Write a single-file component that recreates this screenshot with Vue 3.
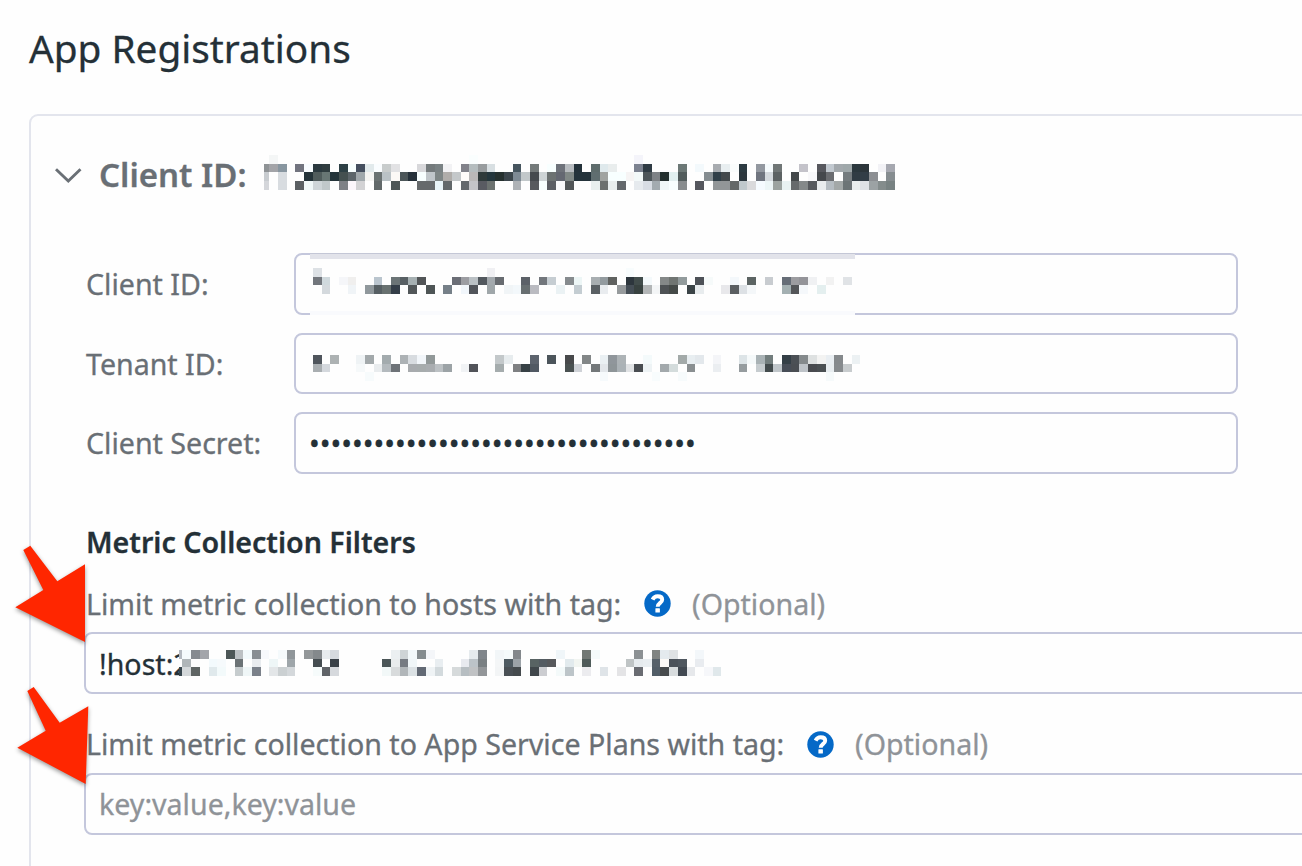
<script setup>
// Column pitch of the redaction mosaic.
const PITCH = 8.69

// Each row: y, height and a list of "column hex" pairs.
const build = (rows, clip = 0) =>
  rows.flatMap(([y, h, data]) =>
    data.split(',').map((pair) => {
      const [i, c] = pair.trim().split(' ')
      const x = Math.max(clip, Math.round(i * PITCH))
      return { x, y, w: Math.round((+i + 1) * PITCH) - x, h, fill: '#' + c }
    })
  )

const headerCells = build([
  [155, 9, '31 f4f6f6,54 fafefe,73 f4f4fa'],
  [164, 8, '30 8f9396,31 a3a4a8,32 8896a0,34 72747f,35 f8fcff,36 2b393f,37 303d40,39 2d4045,40 f8ffff,41 454f5f,42 e2eaec,43 fafdff,44 c8cccc,45 e2e2e4,48 d8d8db,49 747a7c,50 7a8284,51 f2f2f4,53 82828a,54 b5bdbf,55 989c9e,56 d8dfe2,59 46555f,61 747a7a,63 f8ffff,64 6e727a,65 b8bcc0,66 24323a,68 5e6c6c,69 dfe9ec,70 e9eded,73 7c8290,74 2f3b44,78 6c7876,80 f3f9fc,82 a8acb0,83 e8eef0,84 fafcfc,85 2d3b42,87 9398a0,88 f5fafc,89 707676,92 c4c3ca,94 57585e,95 c2c9d0,96 a3a9ad,97 9fa8aa,98 2b383e,99 2c353a,101 f2f2f6,102 a6a8b0'],
  [172, 9, '30 c8ccd0,32 d8dce0,35 25343a,36 505c5c,37 687674,38 24343a,39 445050,40 5c656a,41 a0a8ac,42 f4f4f2,43 6a7272,44 bac2c6,45 fcf9f6,46 4c5659,47 26313a,48 f8ffff,49 c0c6ca,50 7e8686,51 b0adaa,52 c4c8ca,53 fffcfa,54 bab8b8,55 2f3a3a,56 24363c,57 26312f,58 3c464c,59 7e8a94,60 c2c8ca,61 454a4e,62 ced4d6,63 6c7272,64 646872,65 808886,66 24333b,67 24333b,68 606e70,69 a0a3a0,70 f8ffff,71 f8ffff,72 f6f4f4,73 f3f9f9,74 4e565a,75 7e8286,76 24302f,77 e2f0f0,78 525c5c,81 858d91,82 303f48,83 43494c,85 2d373e,87 70757f,88 d5dade,89 5c6263,91 43484a,93 f8f8fa,94 45484c,95 6a6c70,97 757c7f,98 303c44,99 323d46,100 8b8e92,102 868d90'],
  [181, 9, '30 d4d6da,32 d8dce0,34 5b6063,35 f0f8f8,36 ced5d8,37 c0c8ca,39 7e8086,40 fbf6fb,41 d2d2d4,43 62696a,45 4e5656,48 666a6c,49 666a6c,50 e8f4f8,51 62686a,53 64686c,54 c4c4c8,55 595b62,56 6c7270,59 aeb2b6,61 575a5e,62 f8ffff,63 5b5e64,64 f8f8fa,65 525658,68 e9f0ee,69 6c706e,70 e9eeee,71 64686c,73 e6eaee,74 d8dde4,75 a3abb0,76 f0f8f8,77 f8ffff,78 888c8e,80 55575e,82 929698,83 929698,84 646868,85 c0c8cc,86 dadadc,87 f6fbff,88 edf6f7,89 9ca3a0,90 e9f2f2,91 666a6c,92 85898a,93 575a5e,94 e9ecee,95 b5bcc2,96 a3a8a8,97 6c7476,98 e9eeee,99 dfe2e6,100 9ca2a4,101 848c8c,102 788282']
], 264)

const clientCells = build([
  [268, 9, '36 dde1e5,56 f0f0f3,72 f8fcfd'],
  [277, 8, '36 72767c,37 d0d9dd,39 f5f6f9,40 f0efee,43 bac5ce,45 6b7476,46 586064,47 a6b0b2,48 525557,52 6b6e76,53 9c9da2,54 bac0c4,55 52585e,56 a3a9ad,57 676b70,60 5c6168,62 72767c,63 c6cdd2,65 868b8e,66 edf6f6,68 a8aeb1,69 939b9f,70 606260,72 2d363d,73 414c4b,74 f4f9fb,76 848888,77 707572,78 929b9c,80 4d5157,81 f6fafa,84 f4f8fb,86 5c6463,88 c8ccd0,90 666d77,91 9c9ca0,92 949499,93 f0f1f3,95 f2f2f2,97 e0e3e6'],
  [285, 9, '37 d4d9dd,40 f0f4f7,42 90989c,43 565f63,44 687170,45 343e48,47 525759,49 4e5556,51 768088,53 f1f6fb,54 52555b,56 a0a7aa,58 f1f5f7,59 f3f8fb,60 686f71,61 babbc1,64 ebf2f4,66 c4cdd2,68 5a6064,69 e9ecef,71 979b9d,72 454e56,73 384240,74 b3b6b7,75 f3f5f6,76 4e5255,77 454a48,79 3b4447,80 e8ecee,83 e8e8eb,84 5b5f62,85 dde1e5,86 f4f7f9,90 a4b0b2,91 545659,92 f5f8fb,94 e4efef']
])

const tenantCells = build([
  [355, 9, '36 4f555c,38 adb2b3,41 eff3f5,42 a3a9ab,44 a3abae,46 adb2b5,47 d8dce0,48 f2f6fa,49 929999,57 c3c8ca,58 e7ecee,61 5c636d,63 4c555b,65 48494b,67 828687,69 eaf0f3,70 90969b,71 adb3b6,74 f4fafb,78 a3aaa9,79 e8eef1,80 e3e8ec,82 f4f5f8,85 dde4e7,86 f5f9fa,87 a9b2b5,88 727d7d,90 343f46,91 4b5055,92 858a8c,93 dee1e1,94 f3f3f2,95 e9eef2,96 85898c,98 ecf1f3'],
  [364, 8, '36 a9aeb1,37 d4d8dd,41 f6f9fa,43 e9ecee,44 b4babe,45 6e7378,47 a8abae,48 a7acad,49 a9adb0,50 bcc1c4,51 9ca3a6,53 f1f3f5,54 515359,57 a5acad,59 7e8082,60 374145,61 515963,65 4a5151,66 cfd2d7,68 74787a,69 e2e6ea,70 8e9598,71 abb2b6,72 e0e2e4,73 494d51,74 eef3f5,76 a3a9ac,77 d4dcdc,79 8a8f91,82 ebeef1,85 969c9f,87 c6cccf,88 434b4d,89 c0c6ca,90 474d57,91 4a4e53,92 bec3c8,93 494b4f,94 4b5053,95 e8edf0,96 868a8d,97 c8ccce'],
  [372, 9, '42 f7fbfc,69 f6fafc,75 f8fcfd,78 f7fbfc,95 f6fafb']
])

const hostCells = build([
  [650, 9, '20 b4b9c0,21 f5fafc,22 858a90,23 a3a5aa,26 4d5757,27 bcc1c4,28 f3fafc,29 888e93,30 f7f9fc,32 f5fafc,33 90969a,35 939799,36 84898c,37 e8ecef,38 d6dadf,45 ebeff1,46 ced4d6,47 f2f8fa,48 858c8f,49 f4f6f9,54 e6ebee,55 80868b,57 f2f6f8,58 f5fafb,59 83888c,64 f0f6f9,67 727874,68 f4fafa,73 8c9194,75 808482,76 e4eaee,77 dfe2e4,80 f3f7fa'],
  [659, 8, '21 b0b6b9,24 f3fafd,25 f6fafc,27 6c7376,29 e9ecef,31 eef6f7,33 9fa6aa,36 454d51,38 3a4148,44 4b5658,45 e9eced,46 767b82,47 f0f6f8,50 e9eef1,53 e8eaef,54 bcc3c8,55 7a8083,57 f4f6f7,58 4f5b62,59 9ca3a8,61 586363,62 545c62,63 57595c,65 e2eaed,66 f2f5f1,67 4f5b59,72 bfc4c5,73 e6ebee,74 e9eef1,75 56616a,76 fdfaf7,77 4b525a,78 4f575f,80 e9ecf0'],
  [667, 9, '20 38464e,21 d4d8da,22 5f6564,24 e0e9ec,25 f3fafb,27 c6ccce,28 eff6f7,29 7b818a,31 e3e6e8,32 cbd0d2,33 d4d8db,36 f6fbfb,37 606468,38 d6d9dd,44 f2f8f8,45 d8dbdc,46 b1b6b9,47 dbe1e4,48 626974,49 eff3f5,50 d3dadd,52 d6dadb,53 b7bec2,54 c0c2c4,55 939699,57 f3f5f6,58 4a5055,59 454b4e,61 40474b,62 cccdd1,64 f4fafa,65 bdc5c9,67 ececef,69 dfe4e8,71 e4e4e6,73 6a6c72,75 525e68,76 484b4d,77 d8dcde,78 424952,79 e6e8eb,81 f6f7fa,82 e0e8eb']
], 179)

const secret = '•'.repeat(36)
</script>

<template>
  <main class="page">
    <h1 class="title">App Registrations</h1>

    <section class="card">
      <header class="card-head">
        <svg class="chevron" width="28" height="18" viewBox="0 0 28 18">
          <path d="M2 2.300 L14.300 14 L26.500 2.300" fill="none" stroke="#6a7076" stroke-width="2.9" />
        </svg>
        <h2 class="card-title">Client ID:</h2>
        <svg class="mosaic head-mosaic" width="632" height="36" viewBox="264 154 632 36" shape-rendering="crispEdges">
          <rect v-for="(c, i) in headerCells" :key="i" :x="c.x" :y="c.y" :width="c.w" :height="c.h" :fill="c.fill" />
        </svg>
      </header>

      <div class="fields">
        <div class="row">
          <label class="label">Client ID:</label>
          <div class="input client">
            <svg class="mosaic cover" width="545" height="62" viewBox="310 253 545 62" shape-rendering="crispEdges">
              <rect x="310" y="253" width="545" height="62" fill="#fefefe" />
              <rect x="310" y="253" width="545" height="1" fill="#c4c7d6" />
              <rect x="310" y="254" width="545" height="5" fill="#e2e3ea" />
              <rect x="310" y="311" width="545" height="4" fill="#f9fafd" />
              <rect v-for="(c, i) in clientCells" :key="i" :x="c.x" :y="c.y" :width="c.w" :height="c.h" :fill="c.fill" />
            </svg>
          </div>
        </div>
        <div class="row tenant-row">
          <label class="label">Tenant ID:</label>
          <div class="input tenant">
            <svg class="mosaic" width="560" height="57" viewBox="310 335 560 57" shape-rendering="crispEdges">
              <rect v-for="(c, i) in tenantCells" :key="i" :x="c.x" :y="c.y" :width="c.w" :height="c.h" :fill="c.fill" />
            </svg>
          </div>
        </div>
        <div class="row secret-row">
          <label class="label">Client Secret:</label>
          <div class="input secret">{{ secret }}</div>
        </div>
      </div>

      <div class="filters">
        <h3 class="filters-title">Metric Collection Filters</h3>

        <div class="filter-label">
          <span>Limit metric collection to hosts with tag:</span>
          <svg class="help" width="27" height="27" viewBox="0 0 27 27">
            <circle cx="13.500" cy="13.500" r="13.200" fill="#0569c7" />
            <path d="M8.600 9.600 C9.600 7.400 11.200 6.200 13.600 6.200 C16.400 6.200 18.200 7.600 18.200 9.700 C18.200 12.900 13.700 12.900 13.700 16.800" fill="none" stroke="#fff" stroke-width="3.900" />
            <rect x="11.400" y="18.300" width="4.500" height="4.300" rx=".5" fill="#fff" />
          </svg>
          <span class="optional">(Optional)</span>
        </div>
        <div class="input wide host">
          <span class="host-text">!host:2</span>
          <svg class="mosaic" width="560" height="58" viewBox="179 634 560 58" shape-rendering="crispEdges">
            <rect x="179" y="641" width="560" height="44" fill="#fefefe" />
            <rect v-for="(c, i) in hostCells" :key="i" :x="c.x" :y="c.y" :width="c.w" :height="c.h" :fill="c.fill" />
          </svg>
        </div>

        <div class="filter-label second">
          <span>Limit metric collection to App Service Plans with tag:</span>
          <svg class="help" width="27" height="27" viewBox="0 0 27 27">
            <circle cx="13.500" cy="13.500" r="13.200" fill="#0569c7" />
            <path d="M8.600 9.600 C9.600 7.400 11.200 6.200 13.600 6.200 C16.400 6.200 18.200 7.600 18.200 9.700 C18.200 12.900 13.700 12.900 13.700 16.800" fill="none" stroke="#fff" stroke-width="3.900" />
            <rect x="11.400" y="18.300" width="4.500" height="4.300" rx=".5" fill="#fff" />
          </svg>
          <span class="optional">(Optional)</span>
        </div>
        <div class="input wide placeholder">key:value,key:value</div>
      </div>
    </section>

    <svg class="arrows" width="120" height="300" viewBox="0 530 120 300">
      <polygon points="30.3,545.7 57.3,581.3 85,564.3 85,642 15.3,607.3 43.3,590 23.3,550" />
      <polygon points="33.7,687 59.700,722.7 88.300,706.3 85.700,784 17.3,747.7 45.7,730.700 27.3,691" />
    </svg>
  </main>
</template>

<style>
body {
  background: #fefefe;
  overflow: hidden;
}
</style>

<style scoped>
.page {
  position: relative;
  box-sizing: border-box;
  width: 1302px;
  height: 866px;
  overflow: hidden;
  padding-left: 29px;
  background: #fefefe;
  font-family: "Noto Sans", sans-serif;
  font-size: 28.58px;
  color: #696f75;
  -webkit-text-stroke: 0.3px currentColor;
}
h1, h2, h3 { margin: 0; }
.title {
  height: 114px;
  line-height: 96px;
  font-size: 38.75px;
  font-weight: 400;
  color: #243037;
  white-space: nowrap;
}
.card {
  box-sizing: border-box;
  width: 1400px;
  height: 800px;
  border: 2px solid #e3e5ed;
  border-radius: 9px;
}
.card-head {
  display: flex;
  height: 137px;
  padding-left: 23px;
}
.chevron { margin-top: 51px; flex: none; }
.card-title {
  width: 165px;
  margin-left: 17px;
  flex: none;
  line-height: 118px;
  height: 118px;
  font-size: 33px;
  font-weight: 600;
  white-space: nowrap;
}
.head-mosaic { margin-top: 38px; }
.mosaic { display: block; flex: none; }
.fields { padding-left: 55px; }
.row { display: flex; align-items: center; height: 62px; }
.tenant-row { margin-top: 18px; height: 61px; }
.secret-row { margin-top: 18px; }
.label { width: 208px; flex: none; padding-bottom: 1px; white-space: nowrap; }
.input {
  box-sizing: border-box;
  display: flex;
  align-items: center;
  width: 944px;
  height: 100%;
  border: 2px solid #c4c7dc;
  border-radius: 8px;
  padding-left: 14px;
  white-space: nowrap;
  color: #243037;
}
.input.secret { padding-left: 13px; padding-bottom: 1px; }
.cover { margin: -2px 0; }
.filters { padding-left: 53px; }
.filters-title {
  padding: 47px 0 0 2px;
  height: 42px;
  line-height: 42px;
  font-size: 28.6px;
  font-weight: 600;
  color: #243037;
}
.filter-label {
  display: flex;
  align-items: center;
  height: 46px;
  margin-top: 18px;
  margin-bottom: 5px;
  padding-left: 2px;
  white-space: nowrap;
}
.filter-label span { padding-bottom: 1px; }
.filter-label.second { margin-top: 27px; margin-bottom: 6px; }
.help { margin: 0 21.500px 1px 22.300px; flex: none; }
.second .help { margin-bottom: 0; margin-top: 1px; }
.optional { color: #8f9398; }
.input.wide {
  width: 1260px;
  height: 62px;
  padding-left: 13px;
}
.host-text { width: 80px; flex: none; padding-top: 1px; }
.input.placeholder { color: #8f9398; padding-bottom: 1px; }
.arrows {
  position: absolute;
  left: 0;
  top: 530px;
  fill: #ff2600;
  filter: drop-shadow(0 2px 2px rgba(0, 0, 0, 0.4));
}
</style>
